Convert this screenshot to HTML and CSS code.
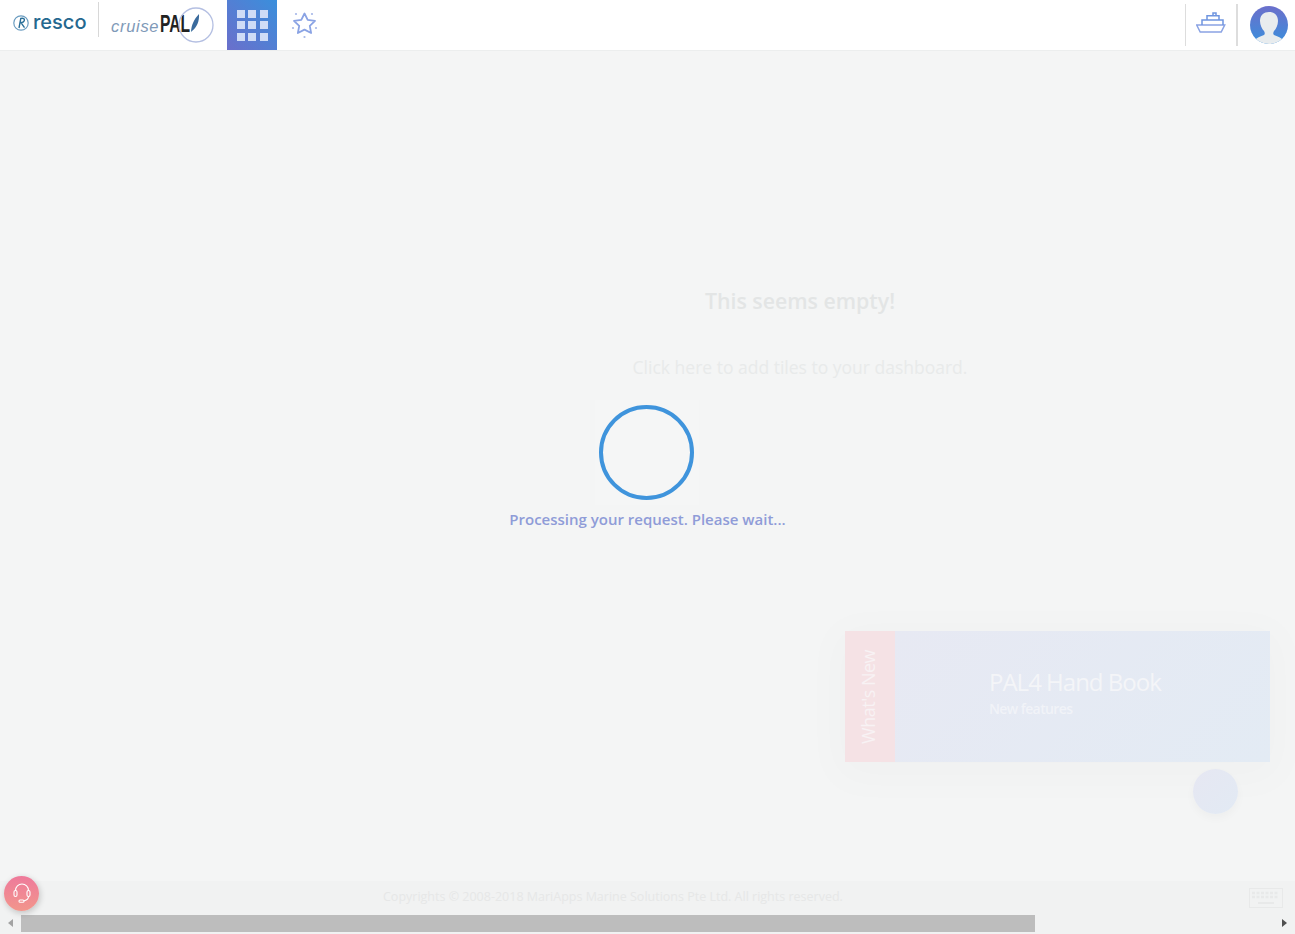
FILE: index.html
```html
<!DOCTYPE html>
<html lang="en">
<head>
  <meta charset="UTF-8" />
  <title>cruisePAL</title>
  <link rel="stylesheet" href="styles.css">
</head>
<body>
  <div class="page">
    <header class="topbar">
      <div class="brand">
        <svg class="resco-mark" viewBox="0 0 16 16" width="16" height="16">
          <circle cx="8" cy="8" r="7.200" fill="none" stroke="#6a9cc0" stroke-width="1.200"/>
          <path d="M6 13 7.800 3.400c2.800-.5 4 .5 3.500 2.200-.4 1.300-2 2-3.700 2M8 7.600l3.500 5" fill="none" stroke="#2a6f98" stroke-width="1.400"/>
        </svg>
        <span class="resco-name">resco</span>
      </div>
      <div class="brand-line"></div>
      <div class="pal-logo">
        <span class="pal-cruise">cruise</span><span class="pal-name">PAL</span>
        <svg class="pal-ring" viewBox="0 0 36 36" width="36" height="36">
          <circle cx="18" cy="18" r="17" fill="none" stroke="#b4bfe2" stroke-width="1.300"/>
          <path d="M13 25c.5-7 2.500-12 8-18 .5 7-2 13-7 17z" fill="#3a6a9c"/>
        </svg>
      </div>
      <a class="apps-btn">
        <span></span><span></span><span></span>
        <span></span><span></span><span></span>
        <span></span><span></span><span></span>
      </a>
      <a class="fav-btn">
        <svg viewBox="0 0 28 28" width="28" height="28">
          <path d="M13.500 2.500l3.200 6.300 7.300 1-5.200 5 1.300 7.200-6.600-3.400-6.600 3.400 1.300-7.200-5.200-5 7.300-1z" fill="none" stroke="#8aa3e4" stroke-width="1.800" stroke-linejoin="round"/>
          <circle cx="5" cy="3" r="1.100" fill="#a5b7e8"/><circle cx="21" cy="3" r="1.100" fill="#a5b7e8"/>
          <circle cx="2" cy="17" r="1.100" fill="#a5b7e8"/><circle cx="25" cy="17" r="1.100" fill="#a5b7e8"/>
          <circle cx="13.500" cy="26" r="1.100" fill="#a5b7e8"/>
        </svg>
      </a>
      <div class="topbar-right">
        <a class="ship-btn">
          <svg viewBox="0 0 30 21" width="30" height="21">
            <path d="M.7 13h28l-3.500 7h-21z" fill="none" stroke="#8aa3e4" stroke-width="1.500"/>
            <path d="M6 13V8h21v5M11 8V3.700h12V8M17 3.700V1h3v2.700" fill="none" stroke="#6f95e0" stroke-width="1.500"/>
          </svg>
        </a>
        <a class="avatar">
          <svg viewBox="0 0 38 38" width="38" height="38">
            <path d="M3 38c1-6 6-6.500 11-9 1-1 1-2 0-4-2-2-4-6-4-10 0-6 4-9 9-9s9 3 9 9c0 4-2 8-4 10-1 2-1 3 0 4 5 2.500 10 3 11 9z" fill="#e8ecee"/>
          </svg>
        </a>
      </div>
    </header>

    <main class="dash">
      <h2 class="empty-title">This seems empty!</h2>
      <p class="empty-text">Click here to add tiles to your dashboard.</p>
    </main>

    <footer class="foot">
      <span class="copy">Copyrights © 2008-2018 MariApps Marine Solutions Pte Ltd. All rights reserved.</span>
      <svg class="keys" viewBox="0 0 34 20" width="34" height="20">
        <rect x="0.500" y="0.500" width="33" height="19" fill="none" stroke="#e8e9e9"/>
        <path d="M3 5h27M3 9h27" stroke="#e8e9e9" stroke-width="2.500" stroke-dasharray="3 1.500"/>
        <path d="M9 15h16" stroke="#e8e9e9" stroke-width="2"/>
      </svg>
    </footer>

    <div class="hscroll">
      <span class="arrow-left"></span>
      <div class="track"><div class="thumb"></div></div>
      <span class="arrow-right"></span>
    </div>

    <!-- whats new card -->
    <aside class="news">
      <div class="news-tab"><span>What's New</span></div>
      <div class="news-body">
        <div class="news-title">PAL4 Hand Book</div>
        <div class="news-sub">New features</div>
      </div>
    </aside>
    <div class="news-toggle"></div>

    <a class="help-btn">
      <svg viewBox="0 0 22 22" width="22" height="22">
        <path d="M4.500 8V7.500a6.500 6.500 0 0 1 13 0V8" fill="none" stroke="#fff" stroke-width="1.100"/>
        <rect x="3" y="7.500" width="3" height="6" rx="1.500" fill="none" stroke="#fff" stroke-width="1.100"/>
        <rect x="16" y="7.500" width="3" height="6" rx="1.500" fill="none" stroke="#fff" stroke-width="1.100"/>
        <path d="M17.500 13.500c0 3-2.500 4-5 4.500" fill="none" stroke="#fff" stroke-width="1.100"/>
        <rect x="8" y="17" width="5" height="2.300" rx="1.100" fill="none" stroke="#fff" stroke-width="1.100"/>
      </svg>
    </a>

    <!-- processing overlay -->
    <div class="loader">
      <div class="loader-box"><div class="spinner"></div></div>
      <div class="loader-text">Processing your request. Please wait...</div>
    </div>
  </div>
</body>
</html>
```

FILE: styles.css
```css
/* page */
* {
  box-sizing: border-box;
}
html, body {
  height: 100%;
}
body {
  margin: 0;
  font-family: "Open Sans", "Liberation Sans", sans-serif;
  background-color: #f4f5f5;
  color: #333;
  overflow: hidden;
}
.page {
  position: relative;
  display: flex;
  flex-direction: column;
  height: 100%;
}

/* top bar */
.topbar {
  display: flex;
  align-items: center;
  height: 51px;
  flex: none;
  background: #fff;
  border-bottom: 1px solid #eceeee;
}
.brand {
  display: flex;
  align-items: center;
  gap: 4px;
  width: 98px;
  padding: 0 0 5px 13px;
}
.resco-name {
  font-family: "Inter", sans-serif;
  font-weight: 500;
  font-size: 20px;
  line-height: 24px;
  margin-bottom: 2px;
  color: #25688f;
}
.brand-line {
  width: 1px;
  height: 35px;
  margin-bottom: 11px;
  background: #d8d8d8;
}
.pal-logo {
  position: relative;
  display: flex;
  align-items: baseline;
  width: 116px;
  height: 36px;
  margin-left: 12px;
  padding-top: 3px;
}
.pal-cruise {
  width: 49px;
  font-family: "Liberation Sans", sans-serif;
  font-style: italic;
  font-size: 16.5px;
  letter-spacing: .7px;
  color: #7f9ab8;
}
.pal-name {
  font-family: "Liberation Sans", sans-serif;
  font-weight: bold;
  font-size: 24px;
  transform: scaleX(.65);
  transform-origin: left;
  color: #222;
}
.pal-ring {
  position: absolute;
  left: 67px;
  top: 0;
}
.apps-btn {
  display: grid;
  grid-template-columns: repeat(3, 8px);
  grid-auto-rows: 8px;
  gap: 3.5px;
  align-content: center;
  justify-content: center;
  width: 50px;
  height: 50px;
  background: linear-gradient(to top right, #6b6fcb, #3a8fdc);
}
.apps-btn span {
  background: #cfdcf6;
}
.fav-btn {
  display: flex;
  margin-left: 14px;
}
.topbar-right {
  display: flex;
  align-items: center;
  margin-left: auto;
  height: 42px;
  margin-bottom: 1px;
}
.ship-btn {
  display: flex;
  align-items: center;
  justify-content: center;
  width: 53px;
  height: 42px;
  padding-bottom: 5px;
  border-left: 1px solid #dddddd;
  border-right: 2px solid #dddddd;
}
.avatar {
  display: block;
  width: 38px;
  height: 38px;
  margin: 0 7px 0 12px;
  border-radius: 50%;
  overflow: hidden;
  background: linear-gradient(to bottom, #6b6fcb, #3a8fdc);
}

/* empty dashboard */
.dash {
  flex: 1;
  padding: 236px 0 0 305px;
  text-align: center;
}
.empty-title {
  margin: 0;
  font-size: 21.3px;
  line-height: 27px;
  font-weight: 600;
  color: #e3e5e5;
}
.empty-text {
  margin: 41px 0 0;
  font-size: 17.5px;
  line-height: 24px;
  color: #e8eaea;
}

/* footer */
.foot {
  display: flex;
  align-items: center;
  flex: none;
  height: 34px;
  padding: 0 12px 4px 383px;
  background: #f1f2f2;
}
.copy {
  font-size: 12.5px;
  color: #e6e7e7;
}
.keys {
  margin-left: auto;
  margin-top: 4px;
}

/* bottom scrollbar */
.hscroll {
  display: flex;
  align-items: flex-start;
  flex: none;
  height: 19px;
  background: #f1f2f2;
}
.track {
  flex: 1;
  padding: 0 235px 0 1px;
}
.thumb {
  height: 17px;
  background: #bdbdbd;
}
.arrow-left, .arrow-right {
  width: 0;
  height: 0;
  margin-top: 4px;
  border-top: 4.5px solid transparent;
  border-bottom: 4.5px solid transparent;
}
.arrow-left {
  margin-left: 8px;
  margin-right: 7px;
  border-right: 5px solid #a3a3a3;
}
.arrow-right {
  margin-left: 12px;
  margin-right: 8px;
  border-left: 5px solid #505050;
}

/* whats new */
.news {
  position: absolute;
  left: 845px;
  top: 631px;
  display: flex;
  width: 425px;
  height: 131px;
  box-shadow: 0 8px 40px 10px rgba(0,0,0,0.02);
}
.news-tab {
  display: flex;
  align-items: center;
  justify-content: center;
  width: 50px;
  padding-right: 4px;
  background: #f5e2e5;
}
.news-tab span {
  writing-mode: vertical-rl;
  transform: rotate(180deg);
  font-size: 18px;
  letter-spacing: -.5px;
  color: #f8f2f4;
}
.news-body {
  flex: 1;
  padding: 35px 0 0 94px;
  background: linear-gradient(135deg, #e7e9f3, #e3ebf4);
}
.news-title {
  font-size: 24px;
  line-height: 32px;
  letter-spacing: -1px;
  color: #f4f5f8;
}
.news-sub {
  font-size: 14px;
  line-height: 20px;
  padding-top: 1px;
  font-weight: 600;
  letter-spacing: -.6px;
  color: #f1f3f8;
}
.news-toggle {
  position: absolute;
  left: 1193px;
  top: 769px;
  width: 45px;
  height: 45px;
  border-radius: 50%;
  background: linear-gradient(to top left, #e2eaf4, #e6e7f2);
  box-shadow: 0 4px 10px rgba(0,0,0,0.03);
}

/* help */
.help-btn {
  position: absolute;
  left: 4px;
  top: 876px;
  display: flex;
  align-items: center;
  justify-content: center;
  width: 35px;
  height: 35px;
  border-radius: 50%;
  background: linear-gradient(to bottom, #ee7a9b, #f2968c);
  box-shadow: 1px 2px 6px rgba(0,0,0,0.2);
}

/* overlay */
.loader {
  position: absolute;
  top: 0;
  left: 0;
  right: 0;
  bottom: 0;
  display: flex;
  flex-direction: column;
  align-items: center;
  justify-content: center;
  padding-bottom: 6px;
}
.loader-box {
  display: flex;
  align-items: center;
  justify-content: center;
  width: 104px;
  height: 105px;
  margin-right: 2px;
  background: #f5f6f6;
}
.spinner {
  width: 95px;
  height: 95px;
  border: 4px solid #3f94dc;
  border-radius: 50%;
}
.loader-text {
  font-size: 15px;
  line-height: 20px;
  margin-top: 4px;
  font-weight: 600;
  color: #8f9cd8;
}
```
